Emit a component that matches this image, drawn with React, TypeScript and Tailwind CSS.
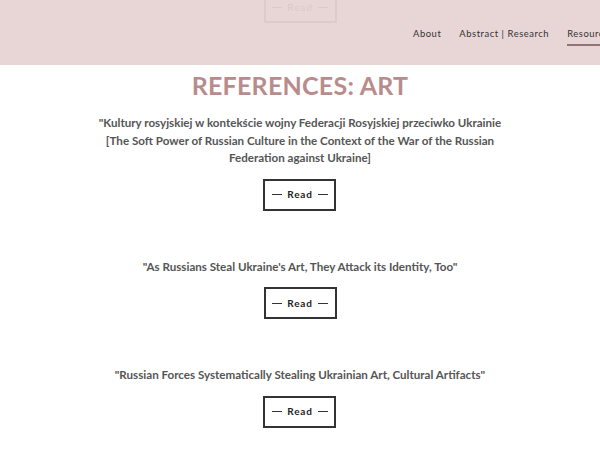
const items = [
  {
    lines: [
      '"Kultury rosyjskiej w kontekście wojny Federacji Rosyjskiej przeciwko Ukrainie',
      "[The Soft Power of Russian Culture in the Context of the War of the Russian",
      "Federation against Ukraine]",
    ],
  },
  { lines: ["\"As Russians Steal Ukraine's Art, They Attack its Identity, Too\""] },
  { lines: ['"Russian Forces Systematically Stealing Ukrainian Art, Cultural Artifacts"'] },
];

function ReadButton() {
  return (
    <a className="flex h-[32px] w-[73px] items-center justify-center gap-[5px] border-2 border-[#333] text-[10px] font-bold tracking-[0.08em] text-[#222]">
      <span className="h-px w-[10px] bg-[#333]" />
      <span>Read</span>
      <span className="h-px w-[10px] bg-[#333]" />
    </a>
  );
}

export default function App() {
  return (
    <div className="relative h-[451px] w-[600px] overflow-hidden bg-white font-['Lato',sans-serif]">
      {/* page content, scrolled under the sticky header */}
      <main className="mt-[-9px] flex flex-col items-center">
        <ReadButton />
        <h1 className="mt-[45px] text-[25px] font-bold leading-[34px] tracking-[0.01em] text-[#b98c8c]">
          REFERENCES: ART
        </h1>
        {items.map((item, i) => (
          <section
            key={i}
            className={`flex flex-col items-center ${i === 0 ? "mt-[12px]" : "mt-[47px]"}`}
          >
            <p className="text-center text-[11.6px] font-bold leading-[17.5px] text-[#555]">
              {item.lines.map((l) => (
                <span key={l} className="block">
                  {l}
                </span>
              ))}
            </p>
            <div className="mt-[12px]">
              <ReadButton />
            </div>
          </section>
        ))}
      </main>

      <header className="absolute left-0 top-0 flex h-[65px] w-full items-center bg-[#e7d4d4]/95 pl-[413px]">
        <nav className="flex items-center gap-[18px] whitespace-nowrap pt-[4px] text-[9.4px] tracking-[0.06em] text-[#333]">
          <a>About</a>
          <a>Abstract | Research</a>
          <a className="relative pr-[4px]">
            Resources
            <span className="absolute left-0 right-0 top-[17px] h-[2px] bg-[#8e7474]" />
          </a>
        </nav>
      </header>
    </div>
  );
}
